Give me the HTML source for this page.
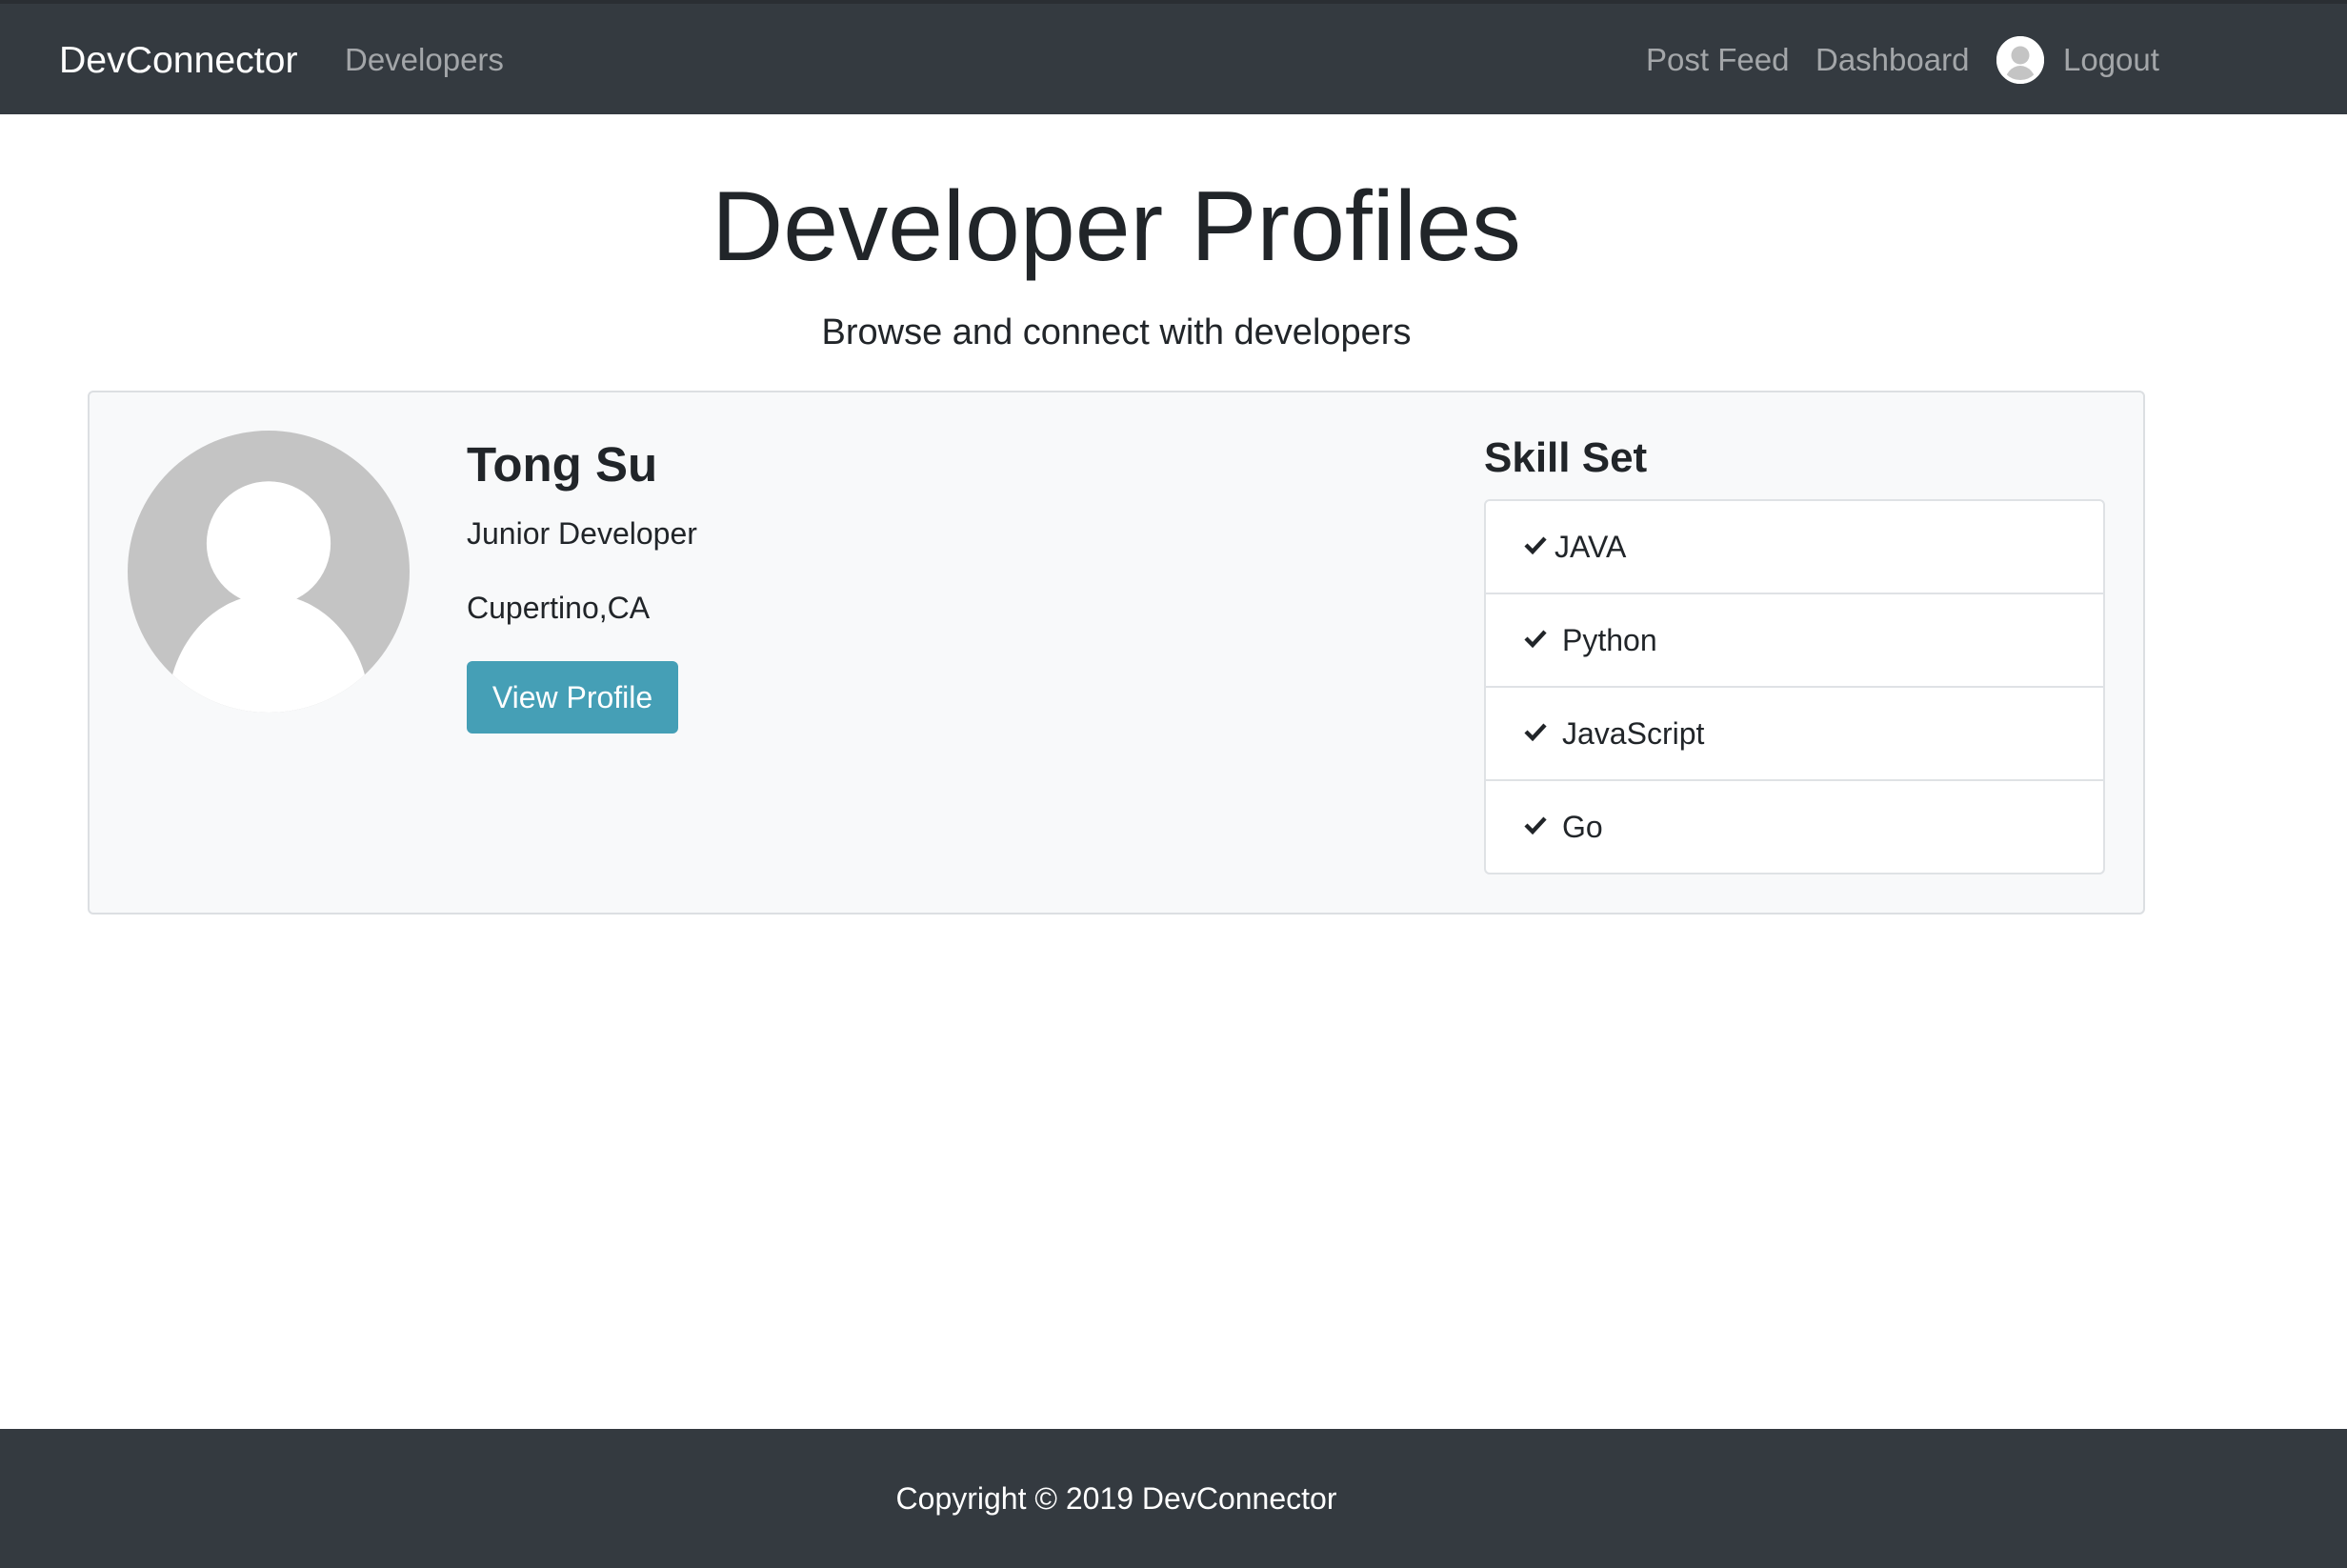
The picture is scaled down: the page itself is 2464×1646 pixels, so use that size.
<!DOCTYPE html>
<html><head><meta charset="utf-8"><style>
html{zoom:2}
body{margin:0;width:1232px;height:823px;position:relative;font-family:"Liberation Sans",sans-serif;color:#212529;background:#fff;overflow:hidden}
.nav{position:absolute;left:0;top:0;width:1232px;height:60px;background:#343a40;border-top:2px solid #2a2e33;box-sizing:border-box}
.nav span{position:absolute;top:20px;font-size:16.5px;color:rgba(255,255,255,.55)}
.abs{position:absolute}
.card{position:absolute;left:46px;top:205px;width:1080px;height:275px;background:#f8f9fa;border:1px solid #dcdfe2;border-radius:3px;box-sizing:border-box}
.list{position:absolute;left:779px;top:262px;width:324px;border:1px solid #dfe2e5;border-radius:3px;background:#fff}
.item{height:48px;border-top:1px solid #dfe2e5;position:relative;font-size:16px}
.item:first-child{border-top:none}
.item svg{position:absolute;left:20px;top:18px}
.item span{position:absolute;left:41px;top:15px}
.footer{position:absolute;left:0;top:750px;width:1232px;height:73px;background:#343a40;color:#fff;font-size:16px;line-height:73px}
</style></head><body>
<div class="nav">
<span style="left:31px;top:19px;font-size:19.6px;color:#fff">DevConnector</span>
<span style="left:181px">Developers</span>
<span style="left:864px">Post Feed</span>
<span style="left:953px">Dashboard</span>
<svg class="abs" style="left:1048px;top:17px" width="25" height="25" viewBox="0 0 100 100"><defs><clipPath id="c1"><circle cx="50" cy="50" r="50"/></clipPath></defs><circle cx="50" cy="50" r="50" fill="#fff"/><g clip-path="url(#c1)"><circle cx="50" cy="40" r="19" fill="#c4c4c4"/><ellipse cx="50" cy="100" rx="33" ry="38" fill="#c4c4c4"/></g><circle cx="50" cy="50" r="46" fill="none" stroke="#fff" stroke-width="8"/></svg>
<span style="left:1083px">Logout</span>
</div>
<div class="abs" style="left:0;width:1172px;top:88px;text-align:center;font-size:52px;font-weight:300;line-height:62px">Developer Profiles</div>
<div class="abs" style="left:0;width:1172px;top:164px;text-align:center;font-size:19px;font-weight:300">Browse and connect with developers</div>
<div class="card"></div>
<svg class="abs" style="left:67px;top:226px" width="148" height="148" viewBox="0 0 100 100"><defs><clipPath id="c2"><circle cx="50" cy="50" r="50"/></clipPath></defs><g clip-path="url(#c2)"><rect width="100" height="100" fill="#c4c4c4"/><circle cx="50" cy="40" r="22" fill="#fff"/><ellipse cx="50" cy="100" rx="36" ry="42" fill="#fff"/></g></svg>
<div class="abs" style="left:245px;top:229px;font-size:25.5px;font-weight:bold;color:#212529">Tong Su</div>
<div class="abs" style="left:245px;top:271px;font-size:16px">Junior Developer</div>
<div class="abs" style="left:245px;top:310px;font-size:16px">Cupertino,CA</div>
<div class="abs" style="left:245px;top:347px;width:111px;height:38px;background:#459fb6;border-radius:3px;color:#fff;font-size:16px;line-height:38px;text-align:center">View Profile</div>
<div class="abs" style="left:779px;top:228px;font-size:22px;font-weight:bold">Skill Set</div>
<div class="list">
<div class="item"><svg width="12" height="10" viewBox="0 0 12 10"><path d="M1 5l3.5 3.5L11 1.5" fill="none" stroke="#212529" stroke-width="2.2"/></svg><span style="left:36px">JAVA</span></div>
<div class="item"><svg width="12" height="10" viewBox="0 0 12 10"><path d="M1 5l3.5 3.5L11 1.5" fill="none" stroke="#212529" stroke-width="2.2"/></svg><span style="left:40px">Python</span></div>
<div class="item"><svg width="12" height="10" viewBox="0 0 12 10"><path d="M1 5l3.5 3.5L11 1.5" fill="none" stroke="#212529" stroke-width="2.2"/></svg><span style="left:40px">JavaScript</span></div>
<div class="item"><svg width="12" height="10" viewBox="0 0 12 10"><path d="M1 5l3.5 3.5L11 1.5" fill="none" stroke="#212529" stroke-width="2.2"/></svg><span style="left:40px">Go</span></div>
</div>
<div class="footer"><div style="width:1172px;text-align:center">Copyright © 2019 DevConnector</div></div>
</body></html>
